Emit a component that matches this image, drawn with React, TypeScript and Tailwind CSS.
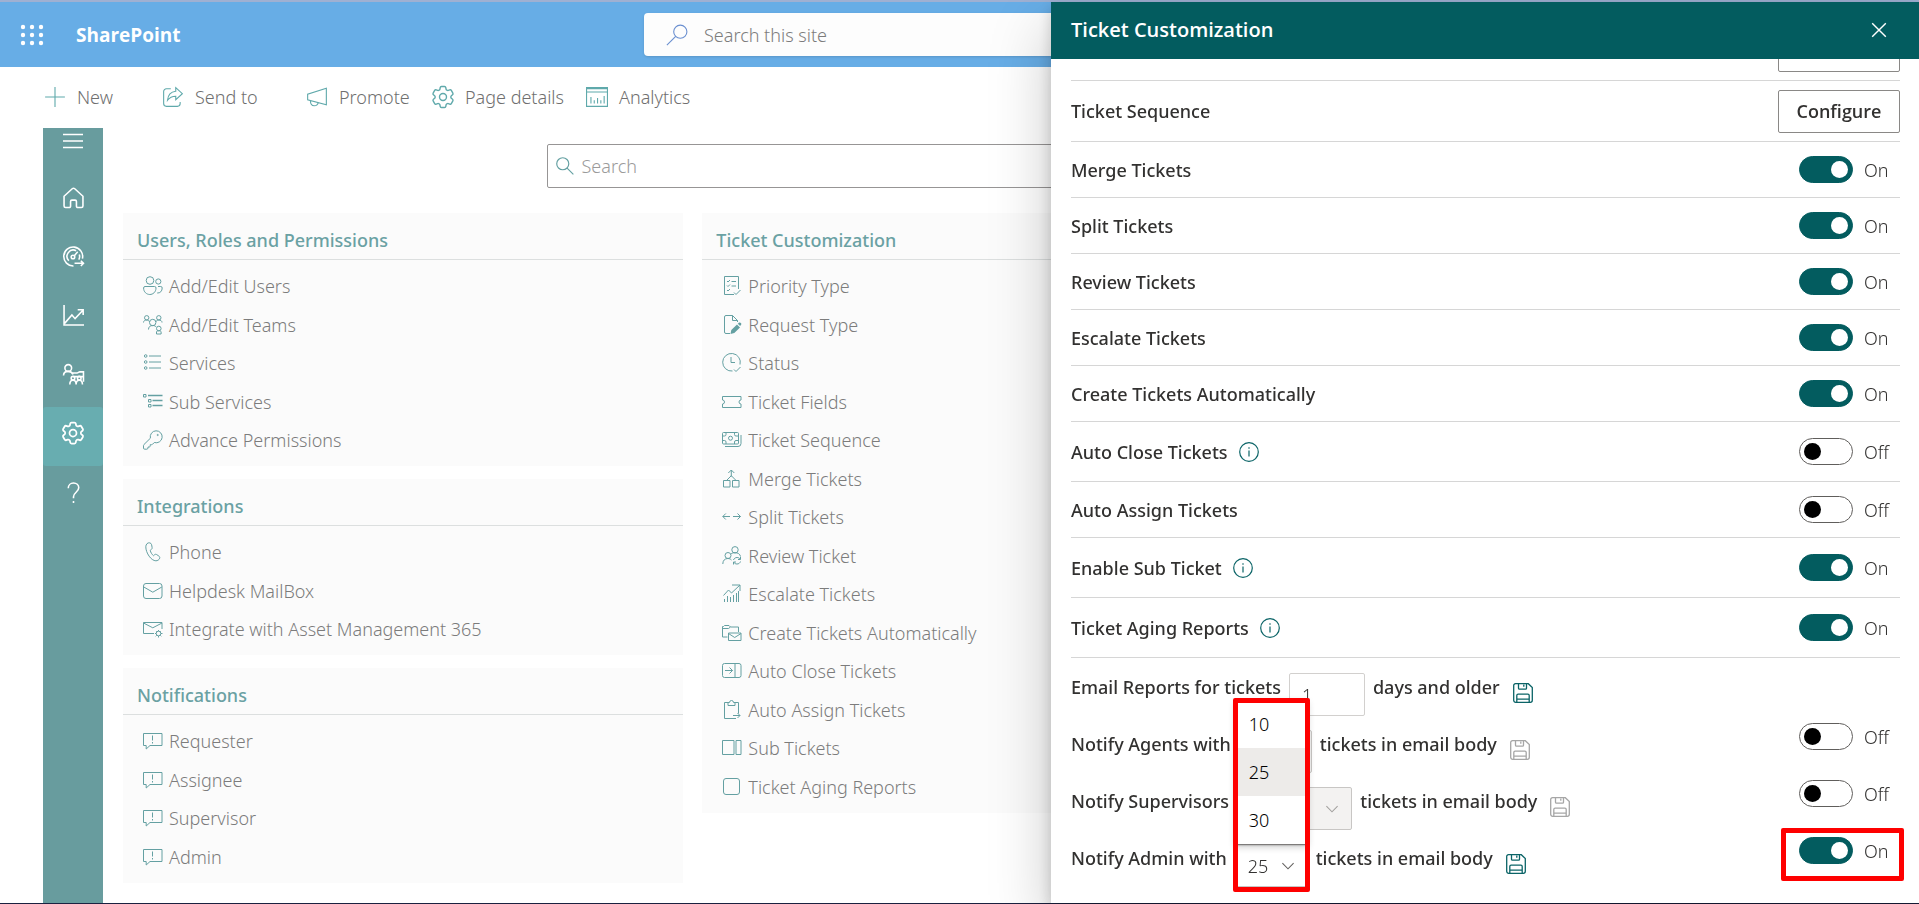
import { useState } from "react";
import type { ReactNode } from "react";
import { HiOutlineCog6Tooth } from "react-icons/hi2";
import clsx from "clsx";

const FONT = "font-['Open_Sans','Noto_Sans',sans-serif]";
const LIGHT = "font-['Noto_Sans','Open_Sans',sans-serif] text-[18px] leading-6 font-light";
const MEDIUM = "font-['Noto_Sans','Open_Sans',sans-serif] text-[18px] leading-6 font-medium";

const ICONS: Record<string, ReactNode> = {
  plus: <path d="M10 1v18M1 10h18" />,
  share: (
    <path d="M8 2.5H4A2.5 2.5 0 0 0 1.5 5v11A2.5 2.5 0 0 0 4 18.5h10a2.5 2.5 0 0 0 2.5-2.5v-1.5M12.5 1.5l6 5.5-6 5.5V9.3C9 9.3 6.800 10.500 5 13c.4-4.500 3-7.700 7.500-8.200z" />
  ),
  promote: (
    <path d="M18.500 2v15L1.500 12.500v-5zM4 13.200c0 2.800 1.200 4.800 3.500 4.800 2 0 3.300-1.200 3.500-3" />
  ),
  analytics: (
    <>
      <path d="M.5 1.500h19v17H.5zM.5 5.500h19M1 2.500h18" />
      <path d="M4.500 10v6M7.500 13v3M10.500 11v5M13.500 13v3M16.500 9v7" />
    </>
  ),
  menu: <path d="M0 3.500h20M0 10h20M0 16.500h20" />,
  home: (
    <path d="M1 8.800 8.800 1.700a1.800 1.800 0 0 1 2.400 0L19 8.800v9.200a1.500 1.500 0 0 1-1.500 1.500H14a1.200 1.200 0 0 1-1.200-1.200v-4.500a1.300 1.300 0 0 0-1.300-1.300h-3a1.300 1.300 0 0 0-1.300 1.300v4.500A1.200 1.200 0 0 1 6 19.500H2.500A1.500 1.500 0 0 1 1 18z" />
  ),
  gauge: (
    <>
      <path d="M10 19A9 9 0 1 1 18.500 12M5.500 14a6 6 0 0 1 7-9.500M15.500 8a6 6 0 0 1-.5 5M10.800 9.200 14 5.500M11 16.500h8.500M17 14l2.500 2.500L17 19" />
      <circle cx="9.500" cy="10.500" r="1.700" />
    </>
  ),
  trend: (
    <path d="M1 0v19h19M1.500 17.500l7-8 3 3.500L19 5M14 4.500h5.200v5" />
  ),
  people: (
    <>
      <circle cx="5" cy="3.800" r="3.200" />
      <path d="M.5 11C.5 8.500 2.500 7 5 7s4 1.500 4.500 3M9 8.500h4.500c1 0 1.500-1 2.500-1h3.500V17M10 12h9" />
      <circle cx="9.500" cy="13.500" r="1.700" />
      <circle cx="15.500" cy="13.500" r="1.700" />
      <path d="M6.500 19.500c0-2.500 1.300-4 3-4s3 1.500 3 4c0-2.500 1.300-4 3-4s3 1.500 3 4" />
    </>
  ),
  help: <path d="M5 6c0-3 2.200-5 5-5s5 2 5 4.500c0 4-5 4.500-5 8.500v1.500M10 18v2" />,
  users: (
    <>
      <circle cx="7" cy="4.500" r="3.800" />
      <circle cx="15.300" cy="5.500" r="2.600" />
      <path d="M2 10.500h9.500A1.500 1.500 0 0 1 13 12c0 4-3 6.500-6.200 6.500S.6 16 .6 12A1.500 1.500 0 0 1 2 10.500zM15 10.500h2.700A1.500 1.500 0 0 1 19.200 12c0 3-2 5.300-5 5" />
    </>
  ),
  teams: (
    <>
      <circle cx="3.700" cy="2.800" r="2.200" />
      <circle cx="15.800" cy="2.800" r="2.200" />
      <circle cx="9.700" cy="7.500" r="3.200" />
      <circle cx="15.800" cy="13.500" r="2.300" />
      <path d="M.5 7.500C.5 5.800 2 5 3.700 5c1.500 0 2.500 1 3 2M12.700 7c.5-1 1.500-2 3.100-2 1.700 0 3.200.8 3.200 2.500M5.500 14.500c0-2.500 1.500-4 4.200-4 1.500 0 2.800.5 3.500 1.500M13.500 19v-2.200c0-.6 1-1 2.300-1s2.300.4 2.300 1V19z" />
    </>
  ),
  services: (
    <>
      <circle cx="2.700" cy="3" r="1.300" />
      <circle cx="2.700" cy="9" r="1.300" />
      <circle cx="2.700" cy="15" r="1.300" />
      <path d="M6 3h12M6 9h12M6 15h12" />
    </>
  ),
  subServices: (
    <>
      <path d="M.5 2.500h2.500v2.500H.5zM5.500 7.500H8V10H5.500zM5.500 12.500H8V15H5.500z" />
      <path d="M5 3.500h14.500M9.500 8.500h10M9.500 13.500h10" strokeWidth="1.400" />
    </>
  ),
  key: (
    <>
      <path d="M13 .8a6 6 0 1 1-1.700 11.700L9.500 14.300c-.3.300-.7.400-1 .4H7.200v1.400c0 .5-.4.900-.9.900H5v1c0 .7-.5 1.200-1.200 1.200H1.700A1.200 1.200 0 0 1 .5 18v-2.300c0-.4.100-.8.400-1.100l6.500-6.400A6 6 0 0 1 13 .8z" />
      <circle cx="14.700" cy="5" r=".6" />
    </>
  ),
  phone: (
    <path d="M6.800.9c-2.200-.6-4 1.400-4 3.900 0 6.200 5.400 14 10.100 14 1.600 0 3.300-1 3.800-2.600.3-1-.2-1.700-.9-2.200l-2.100-1.400c-.8-.5-1.600-.4-2.200.2l-1 .9C9 12.500 7.800 10.600 7.200 8.400l1.200-1c.6-.5.9-1.200.7-2L8.600 2.700C8.400 1.700 7.700 1.100 6.800.9z" />
  ),
  mail: (
    <>
      <rect x=".5" y="2.500" width="18.500" height="15" rx="2.500" />
      <path d="m.8 6 9 5.200L18.800 6" />
    </>
  ),
  mailGear: (
    <>
      <path d="M11 14.500H.5v-11h18.500V10M.5 4l9.300 4.800L19 4" />
      <circle cx="15.500" cy="14.500" r="2.300" />
      <path d="M15.500 11v1M15.500 17v1.500M12 14.500h1M18 14.500h1.500M13 12l.7.700M17.300 16.300l1 1M18 12l-.7.700M13.700 16.300l-1 1" />
    </>
  ),
  feedback: (
    <>
      <path d="M.5 2.500h18.500v12H7L3.200 18v-3.500H.5z" />
      <path d="M9.500 4.500v5M9.500 11v1.500" />
    </>
  ),
  priority: (
    <>
      <path d="M12 18.500H2.500v-18h14V13M12 16.500l2 2 4.500-4.500M5 5l1 1 2-2M5 9.500l1 1 2-2M5 14l1 1 2-2M9.500 5.500h4.500M9.500 10h4.500" />
    </>
  ),
  request: (
    <>
      <path d="M8 18.500H4A1.500 1.500 0 0 1 2.500 17V2A1.500 1.500 0 0 1 4 .5h6.500l5 5V7M10.500.5v5h5" />
      <path
        d="m8.500 19 .8-4 5.700-5.500 3 3-5.700 5.500zM15.800 8.700l1-.9c.7-.5 1.500-.4 2.100.2.600.600.600 1.400 0 2.100l-.8.900z"
        fill="currentColor"
        stroke="none"
      />
    </>
  ),
  status: (
    <path d="M18 11.500A8.800 8.800 0 1 0 10.500 18M9 4v5.500h4M12 16.500l2 2 4.500-4.500" />
  ),
  ticket: (
    <path d="M.5 4.500H19V8a2 2 0 0 0 0 4v3.500H.5V12a2 2 0 0 0 0-4z" />
  ),
  sequence: (
    <>
      <rect x=".5" y="2.500" width="16" height="11.500" rx="1" />
      <circle cx="8.500" cy="8.200" r="2" />
      <path d="M.5 6h2A1.500 1.500 0 0 0 4 4.500v-2M12.500 2.500v2A1.500 1.500 0 0 0 14 6h2.500M.5 10.500h2A1.500 1.500 0 0 1 4 12v2M12.500 14v-2a1.500 1.500 0 0 1 1.500-1.500h2.500M3 16.500h13a3 3 0 0 0 3-3V5" />
    </>
  ),
  merge: (
    <path d="M1.500 11.500H8V18H1.500zM10.500 11.500H17V18h-6.500zM9.300 1v6.500M6.300 4l3-3 3 3M5 11l4.300-4.300L13.600 11" />
  ),
  split: <path d="M.8 9.500H8M3.800 6.500l-3 3 3 3M11 9.500h7.500M15.500 6.500l3 3-3 3" />,
  review: (
    <>
      <circle cx="13" cy="3.800" r="3.200" />
      <circle cx="6" cy="9.500" r="3" />
      <path d="M.8 18c0-3.500 2-5.500 5-5.500 1.500 0 3 .5 3.700 1.500M9 8c1-1 2.500-1.300 4-1.300 3 0 5 1.300 5.500 3.800M11.500 14c.5-1.500 1.800-2.500 3.500-2.500 1.200 0 2.500.5 3.200 1.700M18.500 11v2.500H16M18.500 15.500c-.5 1.500-1.800 2.500-3.500 2.500-1.200 0-2.500-.500-3.200-1.700M11.500 18.500V16H14" />
    </>
  ),
  escalate: (
    <path d="M1.500 11.500 6.500 6l3 3 8.500-8M10 1h8v6M2.500 15v3M5.500 12v6M8.500 13v5M11.500 11v7M14.500 9v9M16.500 7v11" />
  ),
  create: (
    <path d="M5.500 14H.5V3.500h1l1-1H7l1.500 1.500h8V9M.5 5.500h6l2-1.500M6.500 10h12.500v7.500H6.500zM6.500 10.500l6.200 4 6.300-4" />
  ),
  autoClose: (
    <>
      <rect x=".5" y="2.500" width="18.500" height="14" rx="2" />
      <path d="M13 2.500v14M3 9.500h7.500M7.500 6.500l3 3-3 3" />
    </>
  ),
  autoAssign: (
    <path d="M14 18.500H2.500v-16H6M13 2.500h3.500v11M6 2.500h1.500a2 2 0 0 1 4 0H13v3H6zM11 15.500h7M15.500 13l2.500 2.500-2.500 2.500" />
  ),
  sub: <path d="M.5 2.500H12V16.500H.5zM14 2.500h5v14h-5z" />,
  square: <rect x="1.500" y="1.500" width="16" height="16" rx="2.500" />,
  info: (
    <>
      <circle cx="10" cy="10" r="9.300" />
      <path d="M10 8.500v6M10 5.300v1.400" />
    </>
  ),
  save: (
    <>
      <path d="M2.500.7h12.800l4 3.800v12.800a2 2 0 0 1-2 2H2.700a2 2 0 0 1-2-2V2.500a1.800 1.800 0 0 1 1.800-1.800z" />
      <path d="M5.500.7v4.500c0 .6.400 1 1 1h6c.6 0 1-.4 1-1V.7M10.800 1.500v2.300M3.800 19v-6.500c0-.8.500-1.300 1.300-1.300h9.800c.8 0 1.300.5 1.300 1.300V19M4 16.200h12" />
    </>
  ),
  chevron: <path d="m3 6.500 7 7 7-7" />,
  close: <path d="m1.500 1.500 17 17M18.500 1.500l-17 17" />,
  searchLeft: (
    <>
      <circle cx="13" cy="7" r="6" />
      <path d="M8.800 11.200.8 19.200" />
    </>
  ),
  searchRight: (
    <>
      <circle cx="7.500" cy="7.500" r="6.700" />
      <path d="m12.300 12.300 7 7" />
    </>
  ),
};

function Icon({
  name,
  className = "size-5",
  width = 1,
}: {
  name: string;
  className?: string;
  width?: number;
}) {
  return (
    <svg
      viewBox="0 0 20 20"
      fill="none"
      stroke="currentColor"
      strokeWidth={width}
      className={clsx("shrink-0 overflow-visible", className)}
      aria-hidden="true">
      {ICONS[name]}
    </svg>
  );
}

const COMMANDS = [
  { icon: "plus", label: "New", box: "w-[118px]" },
  { icon: "share", label: "Send to", box: "w-36" },
  { icon: "promote", label: "Promote", box: "w-[126px]" },
  { icon: "gear", label: "Page details", box: "w-[154px]" },
  { icon: "analytics", label: "Analytics", box: "w-36" },
];

const NAV = [
  { icon: "home", label: "Home" },
  { icon: "gauge", label: "Dashboard" },
  { icon: "trend", label: "Reports" },
  { icon: "people", label: "Teams" },
  { icon: "gear", label: "Settings" },
  { icon: "help", label: "Help" },
];

const LEFT_CARDS = [
  {
    title: "Users, Roles and Permissions",
    items: [
      ["users", "Add/Edit Users"],
      ["teams", "Add/Edit Teams"],
      ["services", "Services"],
      ["subServices", "Sub Services"],
      ["key", "Advance Permissions"],
    ],
  },
  {
    title: "Integrations",
    items: [
      ["phone", "Phone"],
      ["mail", "Helpdesk MailBox"],
      ["mailGear", "Integrate with Asset Management 365"],
    ],
  },
  {
    title: "Notifications",
    items: [
      ["feedback", "Requester"],
      ["feedback", "Assignee"],
      ["feedback", "Supervisor"],
      ["feedback", "Admin"],
    ],
  },
];

const TICKET_ITEMS = [
  ["priority", "Priority Type"],
  ["request", "Request Type"],
  ["status", "Status"],
  ["ticket", "Ticket Fields"],
  ["sequence", "Ticket Sequence"],
  ["merge", "Merge Tickets"],
  ["split", "Split Tickets"],
  ["review", "Review Ticket"],
  ["escalate", "Escalate Tickets"],
  ["create", "Create Tickets Automatically"],
  ["autoClose", "Auto Close Tickets"],
  ["autoAssign", "Auto Assign Tickets"],
  ["sub", "Sub Tickets"],
  ["square", "Ticket Aging Reports"],
];

const SETTINGS = [
  { label: "Merge Tickets", on: true },
  { label: "Split Tickets", on: true },
  { label: "Review Tickets", on: true },
  { label: "Escalate Tickets", on: true },
  { label: "Create Tickets Automatically", on: true },
  { label: "Auto Close Tickets", on: false, info: true },
  { label: "Auto Assign Tickets", on: false },
  { label: "Enable Sub Ticket", on: true, info: true },
  { label: "Ticket Aging Reports", on: true, info: true },
];

function Card({ title, items }: { title: string; items: string[][] }) {
  return (
    <section className="bg-[#fbfbfb]">
      <h2 className={clsx(MEDIUM, "h-[47px] border-b border-[#dcdfdf] pt-[15px] pl-[14px] text-[#6aa1a3]")}>
        {title}
      </h2>
      <ul className="py-[7px] pl-5">
        {items.map(([icon, label]) => (
          <li key={label} className="flex items-center odd:h-[38px] even:h-[39px]">
            <a href="#" className={clsx(LIGHT, "flex items-center gap-[6px] text-[#7c7c7c]")}>
              <span className="text-[#64a0a2]">
                <Icon name={icon} />
              </span>
              {label}
            </a>
          </li>
        ))}
      </ul>
    </section>
  );
}

function Toggle({ label, initial }: { label: string; initial: boolean }) {
  const [on, setOn] = useState(initial);

  return (
    <label className="flex w-[101px] items-center gap-[11px]">
      <input
        type="checkbox"
        role="switch"
        aria-label={label}
        checked={on}
        onChange={(e) => setOn(e.target.checked)}
        className="peer sr-only"
      />
      <span
        className={clsx(
          "flex h-[27px] w-[54px] items-center rounded-full border px-1",
          on ? "justify-end border-[#035c5f] bg-[#035c5f]" : "border-[#605e5c] bg-white"
        )}>
        <span className={clsx("size-[17px] rounded-full", on ? "bg-white" : "bg-black")} />
      </span>
      <span className={clsx(LIGHT, "text-[#323130]")}>{on ? "On" : "Off"}</span>
    </label>
  );
}

const rowBase = "flex items-center justify-between border-b border-[#d6d6d6]";
const configureBtn =
  "h-[43px] w-[122px] rounded-[2px] border border-[#8a8886] bg-white text-[18px] leading-6 font-semibold text-[#323130]";

function SaveButton({ disabled }: { disabled?: boolean }) {
  return (
    <button
      type="button"
      aria-label="Save"
      disabled={disabled}
      className={clsx("ml-[13px] pt-3", disabled ? "text-[#a6a6a6]" : "text-[#0b6467]")}>
      <Icon name="save" width={1.300} />
    </button>
  );
}

function CountSelect({
  label,
  disabled,
  value,
  onChange,
}: {
  label: string;
  disabled?: boolean;
  value: string;
  onChange?: (value: string) => void;
}) {
  return (
    <span className="relative block">
      <select
        aria-label={label}
        disabled={disabled}
        value={value}
        onChange={(e) => onChange?.(e.target.value)}
        className={clsx(
          LIGHT,
          "block h-[43px] w-[73px] appearance-none rounded-[2px] border border-[#c8c6c4]",
          disabled ? "bg-[#f3f2f1] pl-1 text-[#a19f9d]" : "bg-white pl-3 text-[#323130]"
        )}>
        <option>10</option>
        <option>25</option>
        <option>30</option>
      </select>
      <span
        className={clsx(
          "pointer-events-none absolute inset-y-0 right-3 flex items-center",
          disabled ? "text-[#a19f9d]" : "text-[#605e5c]"
        )}>
        <Icon name="chevron" className="size-4" width={1.300} />
      </span>
    </span>
  );
}

function NotifyRow({
  children,
  toggle,
}: {
  children: ReactNode;
  toggle?: ReactNode;
}) {
  return (
    <div className={clsx(MEDIUM, "flex h-[57px] items-center justify-between text-[#323130]")}>
      <div className="flex items-center">{children}</div>
      {toggle && <div className="relative pb-[14px]">{toggle}</div>}
    </div>
  );
}

function Drawer() {
  const [count, setCount] = useState("25");

  return (
    <aside className="fixed top-[2px] right-0 bottom-px flex w-[868px] flex-col bg-white shadow-[0_26px_58px_0_rgba(0,0,0,0.22),0_5px_14px_0_rgba(0,0,0,0.18)]">
      <header className="flex h-[57px] shrink-0 items-center justify-between bg-[#035c5f] pr-8 pb-[2px] pl-5 text-white">
        <h2 className="text-[20px] leading-7 font-semibold">Ticket Customization</h2>
        <button type="button" aria-label="Close">
          <Icon name="close" className="size-4" width={1.800} />
        </button>
      </header>
      <div className="flex-1 overflow-hidden pr-[19px] pl-5">
        <div className={clsx(rowBase, "-mt-[39px] h-[61px] justify-end")}>
          <button type="button" aria-label="Configure ticket fields" className={configureBtn} />
        </div>
        <div className={clsx(rowBase, "h-[61px]")}>
          <span className={clsx(MEDIUM, "text-[#323130]")}>Ticket Sequence</span>
          <button type="button" className={configureBtn}>
            Configure
          </button>
        </div>
        {SETTINGS.map(({ label, on, info }) => (
          <div key={label} className={clsx(rowBase, info ? "h-[60px]" : "h-14")}>
            <span className={clsx(MEDIUM, "flex items-center gap-[11px] text-[#323130]")}>
              {label}
              {info && (
                <span className="text-[#0b6467]">
                  <Icon name="info" width={1.200} />
                </span>
              )}
            </span>
            <Toggle label={label} initial={on} />
          </div>
        ))}

        <NotifyRow>
          <label htmlFor="days">Email Reports for tickets</label>
          <span className="px-2 pt-4">
            <input
              id="days"
              type="text"
              defaultValue="1"
              className={clsx(LIGHT, "block h-[43px] w-[76px] rounded-[2px] border border-[#d2d0ce] bg-white pl-3")}
            />
          </span>
          days and older
          <SaveButton />
        </NotifyRow>
        <NotifyRow toggle={<Toggle label="Notify Agents" initial={false} />}>
          Notify Agents with
          <span className="px-2 pt-4">
            <CountSelect label="Agent tickets" disabled value="10" />
          </span>
          tickets in email body
          <SaveButton disabled />
        </NotifyRow>
        <NotifyRow toggle={<Toggle label="Notify Supervisors" initial={false} />}>
          Notify Supervisors with
          <span className="px-2 pt-4">
            <CountSelect label="Supervisor tickets" disabled value="10" />
          </span>
          tickets in email body
          <SaveButton disabled />
        </NotifyRow>
        <NotifyRow
          toggle={
            <>
              <Toggle label="Notify Admin" initial={true} />
              <span className="pointer-events-none absolute -top-[9px] -right-1 h-[53px] w-[123px] rounded-[2px] border-[5px] border-[#fe0000]" />
            </>
          }>
          Notify Admin with
          <span className="px-2 pt-4">
            <span className="relative block">
              <CountSelect label="Admin tickets" value={count} onChange={setCount} />
              <ul className="absolute inset-x-0 bottom-full bg-white pt-px shadow-[0_3px_7px_0_rgba(0,0,0,0.2),0_1px_2px_0_rgba(0,0,0,0.4)]">
                {["10", "25", "30"].map((n) => (
                  <li key={n}>
                    <button
                      type="button"
                      onClick={() => setCount(n)}
                      className={clsx(
                        LIGHT,
                        "h-12 w-full pl-[14px] text-left text-black",
                        n === count ? "bg-[#edebe9]" : "bg-white"
                      )}>
                      {n}
                    </button>
                  </li>
                ))}
              </ul>
              <span className="pointer-events-none absolute -inset-x-[2px] -bottom-[5px] h-[194px] rounded-[2px] border-[5px] border-[#fe0000]" />
            </span>
          </span>
          tickets in email body
          <SaveButton />
        </NotifyRow>
      </div>
    </aside>
  );
}

export default function App() {
  return (
    <div
      className={clsx(
        FONT,
        "flex h-screen flex-col overflow-hidden border-t-2 border-b border-t-[#9fb0d2] border-b-[#1a2140] bg-white"
      )}>
      <header className="flex h-[65px] shrink-0 items-center bg-[#67ade6] pl-5">
        <button type="button" aria-label="App launcher" className="text-white">
          <svg viewBox="0 0 24 24" className="size-6" fill="currentColor">
            {[4, 12, 20].map((y) =>
              [3, 12, 21].map((x) => <circle key={`${x}-${y}`} cx={x} cy={y} r="2.200" />)
            )}
          </svg>
        </button>
        <h1 className="w-[568px] pl-8 text-[19px] leading-7 font-bold text-white">SharePoint</h1>
        <div className="ml-8 flex h-[43px] w-[632px] shrink-0 items-center gap-4 rounded-[4px] bg-[#fdfdfd] pl-[22px] text-[#6a8fd0] shadow-sm">
          <Icon name="searchLeft" className="size-[22px]" />
          <input
            type="search"
            aria-label="Search this site"
            placeholder="Search this site"
            className={clsx(LIGHT, "flex-1 bg-transparent outline-none placeholder:text-[#7c7c7c]")}
          />
        </div>
      </header>

      <div className="flex h-[61px] shrink-0 items-center pb-[2px] pl-11">
        {COMMANDS.map(({ icon, label, box }) => (
          <button
            key={label}
            type="button"
            className={clsx(LIGHT, "flex items-center gap-[11px] text-[#6f6f6f]", box)}>
            <span className="text-[#5fa9ab]">
              {icon === "gear" ? (
                <HiOutlineCog6Tooth className="-m-[3px] size-7 stroke-[1.2]" />
              ) : (
                <Icon name={icon} className="size-[22px]" />
              )}
            </span>
            {label}
          </button>
        ))}
      </div>

      <div className="flex flex-1 overflow-hidden pl-[43px]">
        <nav className="w-[60px] shrink-0 bg-[#689c9e] text-white">
          <button type="button" aria-label="Menu" className="flex h-[43px] w-full justify-center pt-[3px]">
            <Icon name="menu" width={1.500} />
          </button>
          {NAV.map(({ icon, label }) => (
            <button
              key={label}
              type="button"
              aria-label={label}
              className={clsx(
                "flex h-[59px] w-full items-center justify-center rounded-[3px] pb-[7px]",
                label === "Settings" && "bg-[#68adb0]"
              )}>
              {icon === "gear" ? (
                <HiOutlineCog6Tooth className="size-7" />
              ) : (
                <Icon name={icon} className="size-[21px]" width={1.500} />
              )}
            </button>
          ))}
        </nav>

        <main className="flex-1 pt-4 pr-[77px] pl-5">
          <div className="mx-auto mb-[25px] flex h-11 w-[872px] items-center gap-2 rounded-[2px] border border-[#979595] pl-2 text-[#64a0a2]">
            <Icon name="searchRight" className="size-[18px]" width={1.300} />
            <input
              type="search"
              aria-label="Search"
              placeholder="Search"
              className={clsx(LIGHT, "flex-1 bg-transparent outline-none placeholder:text-[#9a9a9a]")}
            />
          </div>
          <div className="grid grid-cols-3 items-start gap-[19px]">
            <div className="flex flex-col gap-[13px]">
              {LEFT_CARDS.map((card) => (
                <Card key={card.title} {...card} />
              ))}
            </div>
            <Card title="Ticket Customization" items={TICKET_ITEMS} />
          </div>
        </main>
      </div>

      <Drawer />
    </div>
  );
}
